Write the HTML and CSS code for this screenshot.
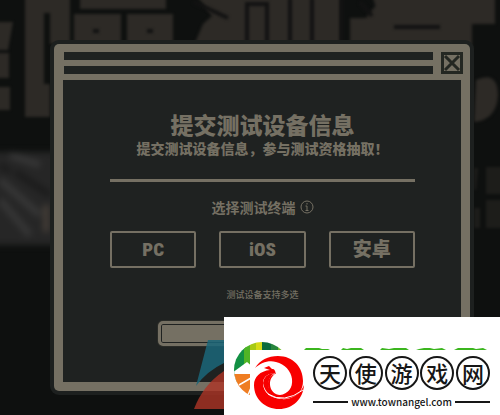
FILE: index.html
```
<!DOCTYPE html>
<html lang="zh-CN">
<head>
<meta charset="utf-8">
<meta name="viewport" content="width=device-width, initial-scale=1">
<title>提交测试设备信息</title>
<link rel="stylesheet" href="styles.css">
</head>
<body>
<svg class="backdrop" viewBox="0 0 500 415" preserveAspectRatio="xMidYMid slice" aria-hidden="true">
  <defs>
    <filter id="soft" x="-10%" y="-10%" width="120%" height="120%" color-interpolation-filters="sRGB"><feGaussianBlur stdDeviation="1.5"/></filter>
    <filter id="softer" x="-20%" y="-20%" width="140%" height="140%" color-interpolation-filters="sRGB"><feGaussianBlur stdDeviation="3"/></filter>
  </defs>
  <rect width="500" height="415" fill="#0e100f"/>
  <g fill="#2d2a26" filter="url(#soft)">
    <path d="M-5 22H13L8 50H-5zM-5 53H9V78H-5zM-5 87H10V110H-5z"/>
    <path d="M25-5H70V44H50V13H44V84H50V117H25z"/>
    <path d="M80-5H166V9H80zM74 14H121V50H74zM127 14H173V50H127z"/>
    <path d="M196-5H340V50H192L203 24L212 16z"/>
    <path d="M350 18H366L372 10L386-5L394 14V50H350zM372-5H495V24H472V50H378V14z"/>
    <path d="M476 80Q498 70 498 96Q496 120 474 122z"/>
  </g>
  <g fill="#2d2a26" opacity=".5" filter="url(#soft)">
    <path d="M474 168H478L476 190H474zM486 167H505V194H486zM486 200H505V228H486zM474 208H480V228H474z"/>
  </g>
  <g fill="none" stroke="#121212" stroke-width="4" filter="url(#soft)">
    <path d="M194 2L228 18M247 44V4H267V44M290-2V50M312-2V50M342-2V50M394 27H440M360 2L372 16"/>
    <path d="M93 31H99M147 31H153"/>
  </g>
  <g filter="url(#softer)">
    <path d="M-10 152H60V245H-10z" fill="#262626"/>
    <path d="M0 180L40 215M10 155L40 165M0 200L30 235" fill="none" stroke="#363636" stroke-width="7"/>
    <path d="M15 172L50 195M0 165L10 172" fill="none" stroke="#1c1c1c" stroke-width="7"/>
    <path d="M46 205V232" stroke="#4a423a" stroke-width="5"/>
  </g>
</svg>

<main class="page">
  <section class="dialog" role="dialog" aria-labelledby="dialog-title">
    <header class="titlebar">
      <div class="stripes"><span class="stripe"></span><span class="stripe"></span></div>
      <button class="close" type="button" aria-label="关闭">
        <svg viewBox="0 0 22 22" aria-hidden="true"><path d="M1.500 1.500H20.500V20.500H1.500zM4 4L18 18M18 4L4 18" fill="none" stroke="#242722" stroke-width="3"/></svg>
      </button>
    </header>
    <form class="panel">
      <h1 class="title" id="dialog-title">提交测试设备信息</h1>
      <p class="subtitle">提交测试设备信息，参与测试资格抽取！</p>
      <hr class="divider">
      <h2 class="label">选择测试终端
        <svg class="info" viewBox="0 0 14 14" aria-hidden="true"><circle cx="7" cy="7" r="6" fill="none" stroke="currentColor"/><path d="M7 3V4.500M5.500 6H7V10.500M5.500 10.500H8.500" fill="none" stroke="currentColor"/></svg>
      </h2>
      <div class="choices">
        <button class="choice" type="button">PC</button>
        <button class="choice" type="button">iOS</button>
        <button class="choice" type="button">安卓</button>
      </div>
      <p class="hint">测试设备支持多选</p>
      <button class="submit" type="submit" aria-label="提交"></button>
    </form>
  </section>
</main>

<aside class="watermark">
  <svg class="shards" viewBox="0 0 30 75" aria-hidden="true">
    <path d="M14 0H30V23Q13 31 2 46z" fill="#1b6679" opacity=".85"/>
    <path d="M0 69Q9 45 30 31V69z" fill="#ae3426" opacity=".8"/>
  </svg>
  <div class="sponsor">
    <svg class="under" viewBox="0 0 276 98" aria-hidden="true">
      <defs><clipPath id="disc"><circle cx="38" cy="53" r="28"/></clipPath></defs>
      <g clip-path="url(#disc)">
        <path fill="#129044" d="M8 24H22V66H8z"/><path fill="#50b426" d="M20 24H26V66H20z"/><path fill="#a7ca14" d="M26 24H32V66H26z"/><path fill="#d8dc16" d="M32 24H38V66H32z"/><path fill="#0b6b3c" d="M38 24H47V66H38z"/><path fill="#27853d" d="M47 24H54V66H47z"/><path fill="#70bd2d" d="M54 24H66V66H54z"/>
        <path fill="#fff" d="M8 56L23 45L30 51V90H8z"/>
        <path fill="#ef7d22" d="M8 57H30V90H8z"/>
        <path d="M27 61L15 68M29 66L24 78" stroke="#fff" stroke-width="1.500"/>
      </g>
      <path fill="#3bb51e" d="M80 33L82 31H95L98 32H104L106 33zM117 33L119 31L123 32L127 31H137L140 33zM156 33L158 31L165 32L170 31H182L185 33zM192 33L195 32L200 31H206L210 32L218 31L222 33zM230 33L234 31H249L252 32L259 31L263 33z"/>
    </svg>
    <div class="brand">
      <svg class="bird" viewBox="0 0 50 53" role="img" aria-label="天使游戏网">
        <path fill="#f80000" d="M1 12C6 4 14 0 24 0C39 0 49 11 49 25C49 34 44 40 36 42C24 45 13 38 14 28C14 23 17 19 21 18C12 24 16 39 26 39C34 38 39 32 38 23C37 15 31 8 22 6C14 4 7 7 1 12z"/>
        <path fill="#f80000" d="M10 12L15 10L18 13C21 13 21 15 22 18C15 16 9 21 9 27C9 37 17 42 27 43C37 44 46 39 50 29C49 43 39 53 25 53C11 53 0 43 0 29C0 21 6 15 16 14z"/>
        <path fill="#f80000" d="M9 27Q10 18 20 17Q14 22 14 30Q16 38 28 42Q12 42 9 27z"/>
        <path d="M14 38Q30 48 49 34" fill="none" stroke="#fff"/>
      </svg>
      <div class="wordmark">
        <div class="seals"><span class="seal">天</span><span class="seal">使</span><span class="seal">游</span><span class="seal">戏</span><span class="seal">网</span></div>
        <div class="address">www.townangel.com</div>
      </div>
    </div>
  </div>
</aside>
</body>
</html>
```
FILE: styles.css
```
:root {
  --tan: #757063;
  --panel: #1f2221;
}

* { box-sizing: border-box; }

body {
  margin: 0;
  min-height: 100vh;
  position: relative;
  overflow: hidden;
  background: #0e100f;
  color: var(--tan);
  font-family: "Noto Sans CJK SC", sans-serif;
}

h1, h2, p { margin: 0; }

button { font: inherit; color: inherit; padding: 0; }

.backdrop {
  position: absolute;
  inset: 0;
  width: 100%;
  height: 100%;
}

.page {
  position: relative;
  padding: 44px 30px 20px 54px;
}

.dialog {
  padding: 8px 9px 9px;
  border-radius: 5px;
  background: var(--tan);
  box-shadow: 0 0 0 4px #1d201f;
}

.titlebar {
  display: flex;
  align-items: flex-start;
  gap: 8px;
  padding-left: 1px;
  height: 28px;
  margin-right: -2px;
}

.stripes {
  flex: 1;
  display: grid;
  gap: 6px;
}

.stripe {
  height: 8px;
  background: var(--panel);
}

.close {
  width: 22px;
  height: 22px;
  border: 0;
  background: none;
}

.close svg { display: block; }

.panel {
  display: flex;
  flex-direction: column;
  align-items: center;
  padding: 30px 46px 36px 47px;
  background: var(--panel);
}

.title {
  font-size: 23px;
  line-height: 28px;
  font-weight: 900;
}

.subtitle {
  font-size: 14px;
  line-height: 20px;
  font-weight: 900;
}

.divider {
  width: 100%;
  height: 3px;
  margin: 21px 0 17px;
  border: 0;
  background: var(--tan);
}

.label {
  display: flex;
  align-items: center;
  gap: 4px;
  font-size: 14px;
  line-height: 16px;
  font-weight: 700;
}

.info { width: 14px; height: 14px; }

.choices {
  display: grid;
  grid-template-columns: repeat(3, 1fr);
  gap: 23px;
  width: 100%;
  margin-top: 16px;
}

.choice {
  height: 37px;
  border: 2px solid var(--tan);
  border-radius: 2px;
  background: none;
  font-family: "Liberation Sans Narrow", "Roboto Condensed", "Open Sans Condensed", "Noto Sans CJK SC", sans-serif;
  font-size: 19px;
  line-height: 24px;
  font-weight: 900;
}

.hint {
  margin-top: 20px;
  font-size: 9px;
  line-height: 14px;
  font-weight: 500;
}

.submit {
  width: 210px;
  height: 25px;
  margin-top: 19px;
  border: 3px solid var(--tan);
  border-radius: 5px;
  background: var(--tan);
  box-shadow: inset 0 0 0 1px var(--panel), 0 0 0 1px #2a2c28;
}

.watermark {
  position: absolute;
  right: 0;
  bottom: 0;
  display: flex;
  align-items: flex-end;
}

.shards { width: 30px; height: 75px; }

.sponsor {
  width: 276px;
  height: 98px;
  background: #fff;
}

.under { display: block; width: 276px; height: 98px; }

.brand {
  position: absolute;
  right: 0;
  bottom: 0;
  display: flex;
  gap: 9px;
  width: 250px;
  height: 65px;
  padding: 6px 10px 0 4px;
  background: #fff;
  color: #161616;
}

.bird { width: 50px; height: 53px; }

.wordmark { flex: 1; }

.seals { display: flex; justify-content: space-between; }

.seal {
  width: 34px;
  height: 34px;
  border: 2px solid #161616;
  border-radius: 50%;
  font-size: 22px;
  line-height: 29px;
  font-weight: 500;
  text-align: center;
}

.address {
  display: flex;
  align-items: center;
  gap: 3px;
  font-size: 10px;
  line-height: 16px;
  font-weight: 500;
  margin-top: 4px;
}

.address::before,
.address::after {
  content: "";
  flex: 1;
  height: 2px;
  background: #161616;
}
```
